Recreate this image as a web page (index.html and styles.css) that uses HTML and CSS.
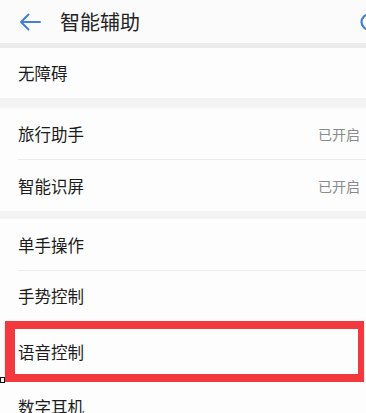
FILE: index.html
```
<!DOCTYPE HTML>
<html>
<head>
<title>智能辅助</title>
<link rel="stylesheet" href="styles.css">
</head>
<body>
<div class="screen">
    <div class="topbar">
        <svg class="back" width="22" height="18" viewBox="0 0 22 18">
            <path d="M21 9H2M9.5 1.5L2 9l7.5 7.5" fill="none" stroke="#3f80d6" stroke-width="2" stroke-linecap="round" stroke-linejoin="round"/>
        </svg>
        <span class="title">智能辅助</span>
        <svg class="search" width="20" height="22" viewBox="0 0 20 22">
            <circle cx="10" cy="11" r="7.5" fill="none" stroke="#3f80d6" stroke-width="2.2"/>
        </svg>
    </div>
    <div class="shade"></div>

    <div class="item">无障碍</div>
    <div class="gap"></div>

    <div class="item tall">旅行助手<span class="state">已开启</span></div>
    <div class="rule"></div>
    <div class="item tall">智能识屏<span class="state">已开启</span></div>
    <div class="gap small"></div>

    <div class="item tall">单手操作</div>
    <div class="rule"></div>
    <div class="item">手势控制</div>
    <div class="item marked">语音控制</div>
    <div class="item">数字耳机</div>

    <span class="dot"></span>
</div>
</body>
</html>
```

FILE: styles.css
```
html, body {
    margin: 0;
    height: 100%;
}
body {
    background: #fdfdfd;
    font-family: "Noto Sans CJK SC", "Noto Sans", sans-serif;
    color: #1c1c1c;
    overflow: hidden;
}
.screen {
    position: relative;
    width: 366px;
    height: 413px;
    overflow: hidden;
}
.topbar {
    height: 43px;
    display: flex;
    align-items: center;
    background: #fbfbfb;
}
.back {
    margin-left: 19px;
}
.title {
    margin-left: 19px;
    font-size: 20px;
    color: #222;
}
.search {
    margin-left: auto;
    margin-right: -13px;
}
.shade {
    height: 5px;
    background: #ebebeb;
}
.item {
    height: 50px;
    display: flex;
    align-items: center;
    padding: 0 6px 0 18px;
    font-size: 16.5px;
    background: #fdfdfd;
}
.item.tall {
    height: 51px;
}
.state {
    margin-left: auto;
    font-size: 14px;
    color: #8a8a8a;
}
.gap {
    height: 10px;
    background: #f3f3f3;
}
.gap.small {
    height: 8px;
}
.rule {
    height: 1px;
    margin-left: 18px;
    background: #ececec;
}
.marked {
    height: 45px;
    margin: 0 2px 0 5px;
    padding-left: 3px;
    border-style: solid;
    border-color: #f23a3e;
    border-width: 8px 6px 8px 10px;
    box-shadow: 0 2px 1px rgba(200, 40, 110, 0.5);
}
.dot {
    position: absolute;
    left: 0;
    top: 377px;
    width: 3px;
    height: 4px;
    border: 1px solid #111;
    background: #fff;
}
```
